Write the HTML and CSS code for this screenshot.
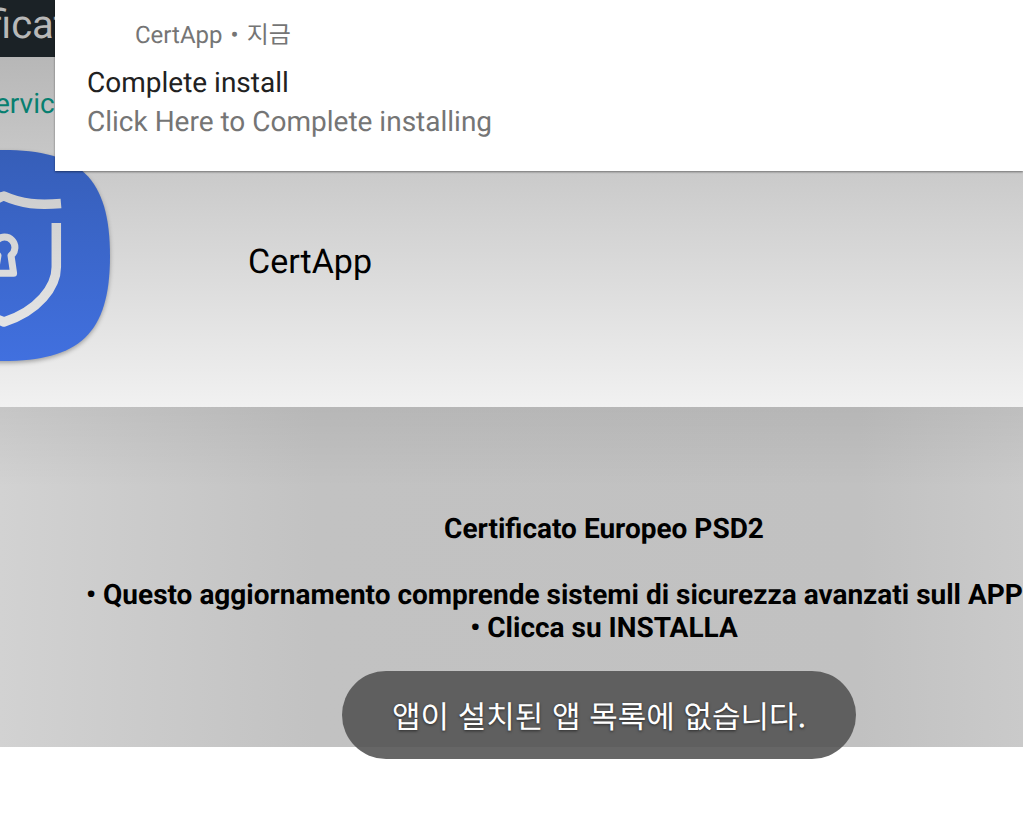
FILE: index.html
```html
<!DOCTYPE html>
<html lang="ko">
<head>
<meta charset="utf-8">
<meta name="viewport" content="width=device-width, initial-scale=1">
<title>CertApp</title>
<link rel="stylesheet" href="styles.css">
</head>
<body>
<main class="screen">
  <header class="app-bar"><span class="app-bar-title">ficat</span></header>
  <section class="app-info">
    <span class="service">ervic</span>
    <div class="app-row">
      <svg class="app-icon" viewBox="0 140 120 236" aria-hidden="true">
        <defs>
          <linearGradient id="tile" x1="0" y1="0" x2="0" y2="1">
            <stop offset="0" stop-color="#365eb8"/>
            <stop offset="1" stop-color="#4170df"/>
          </linearGradient>
          <linearGradient id="line" gradientUnits="userSpaceOnUse" x1="0" y1="190" x2="0" y2="326">
            <stop offset="0" stop-color="#cecece"/>
            <stop offset="1" stop-color="#e4e4e4"/>
          </linearGradient>
        </defs>
        <path class="tile" fill="url(#tile)" d="M3 150C79 150 110 177 110 256C110 334 79 361 3 361C-73 361 -104 334 -104 256C-104 177 -73 150 3 150Z"/>
        <g fill="none" stroke="url(#line)" stroke-linejoin="round">
          <path stroke-width="9.500" d="M-10 201C-4 200 0 197 4 196C22 204 38 205.500 61 203.500"/>
          <path stroke-width="9.500" d="M56.300 223V267C56.300 287 38 311 4 322L-8 317"/>
          <path stroke-width="7" d="M-4 273.300H13.600L11 255.500A10.400 10.400 0 1 0 -2 255.500L-5 273.300"/>
        </g>
      </svg>
      <h1 class="app-name">CertApp</h1>
    </div>
  </section>
  <section class="details">
    <div class="details-text">
      <h2 class="line">Certificato Europeo PSD2</h2>
      <p class="line line-start">• Questo aggiornamento comprende sistemi di sicurezza avanzati sull APP</p>
      <p class="line">• Clicca su INSTALLA</p>
    </div>
  </section>
  <aside class="notification">
    <p class="notification-source"><span>CertApp</span><span>•</span><span>지금</span></p>
    <p class="notification-title">Complete install</p>
    <p class="notification-body">Click Here to Complete installing</p>
  </aside>
  <div class="toast" role="status">앱이 설치된 앱 목록에 없습니다.</div>
</main>
</body>
</html>
```
FILE: styles.css
```css
* {
  box-sizing: border-box;
}

body {
  margin: 0;
  background: #fff;
  font-family: Roboto, "Noto Sans CJK KR", sans-serif;
  text-rendering: geometricPrecision;
}

h1, h2, p {
  margin: 0;
  font-weight: 400;
}

.screen {
  position: relative;
  min-height: 100vh;
  overflow: hidden;
}

.app-bar {
  height: 57px;
  padding-top: 1px;
  background: #1b2226;
  color: #b8b8b8;
  font-size: 40px;
  line-height: 47px;
}

.app-bar-title {
  margin-left: -11px;
}

.app-info {
  padding: 30px 0 31px;
  background: linear-gradient(#b7b7b7, #f1f1f1);
}

.service {
  display: block;
  height: 53px;
  margin-left: -5px;
  color: #077f70;
  font-size: 28px;
  line-height: 33px;
}

.app-row {
  display: flex;
  align-items: center;
}

.app-icon {
  display: block;
  width: 120px;
  height: 236px;
}

.tile {
  filter: drop-shadow(0 2px 2px rgba(0, 0, 0, 0.3));
}

.app-name {
  margin-left: 128px;
  padding-top: 8px;
  color: #000;
  font-size: 34px;
  line-height: 40px;
}

.details {
  min-height: 340px;
  padding: 105px 0 0 86px;
  overflow: hidden;
  background:
    linear-gradient(rgba(0, 0, 0, 0.06), rgba(0, 0, 0, 0) 80px),
    linear-gradient(90deg, #d2d2d2, #c2c2c2 31%, #c1c1c1 84%, #cacaca);
}

.details-text {
  width: 1036px;
  text-align: center;
  color: #000;
}

.line {
  font-size: 28px;
  font-weight: 700;
  line-height: 33px;
  white-space: nowrap;
}

.line-start {
  margin-top: 33px;
  text-align: left;
}

.notification {
  position: absolute;
  top: 0;
  left: 55px;
  right: 0;
  padding: 17px 32px 30px;
  background: #fff;
  box-shadow: 0 1px 2px rgba(0, 0, 0, 0.45);
}

.notification-source {
  display: flex;
  gap: 8px;
  padding-left: 48px;
  color: #757575;
  font-size: 24px;
  line-height: 36px;
}

.notification-title {
  margin-top: 10px;
  color: #212121;
  font-size: 28px;
  line-height: 39px;
}

.notification-body {
  color: #757575;
  font-size: 28px;
  line-height: 39px;
}

.toast {
  position: absolute;
  top: 671px;
  left: 342px;
  padding: 20px 50px;
  border-radius: 44px;
  background: rgba(82, 82, 82, 0.885);
  color: #fff;
  font-family: "Noto Sans CJK KR", sans-serif;
  font-size: 31px;
  line-height: 48px;
  white-space: nowrap;
  text-shadow: 0 1px 3px rgba(0, 0, 0, 0.6);
}
```
